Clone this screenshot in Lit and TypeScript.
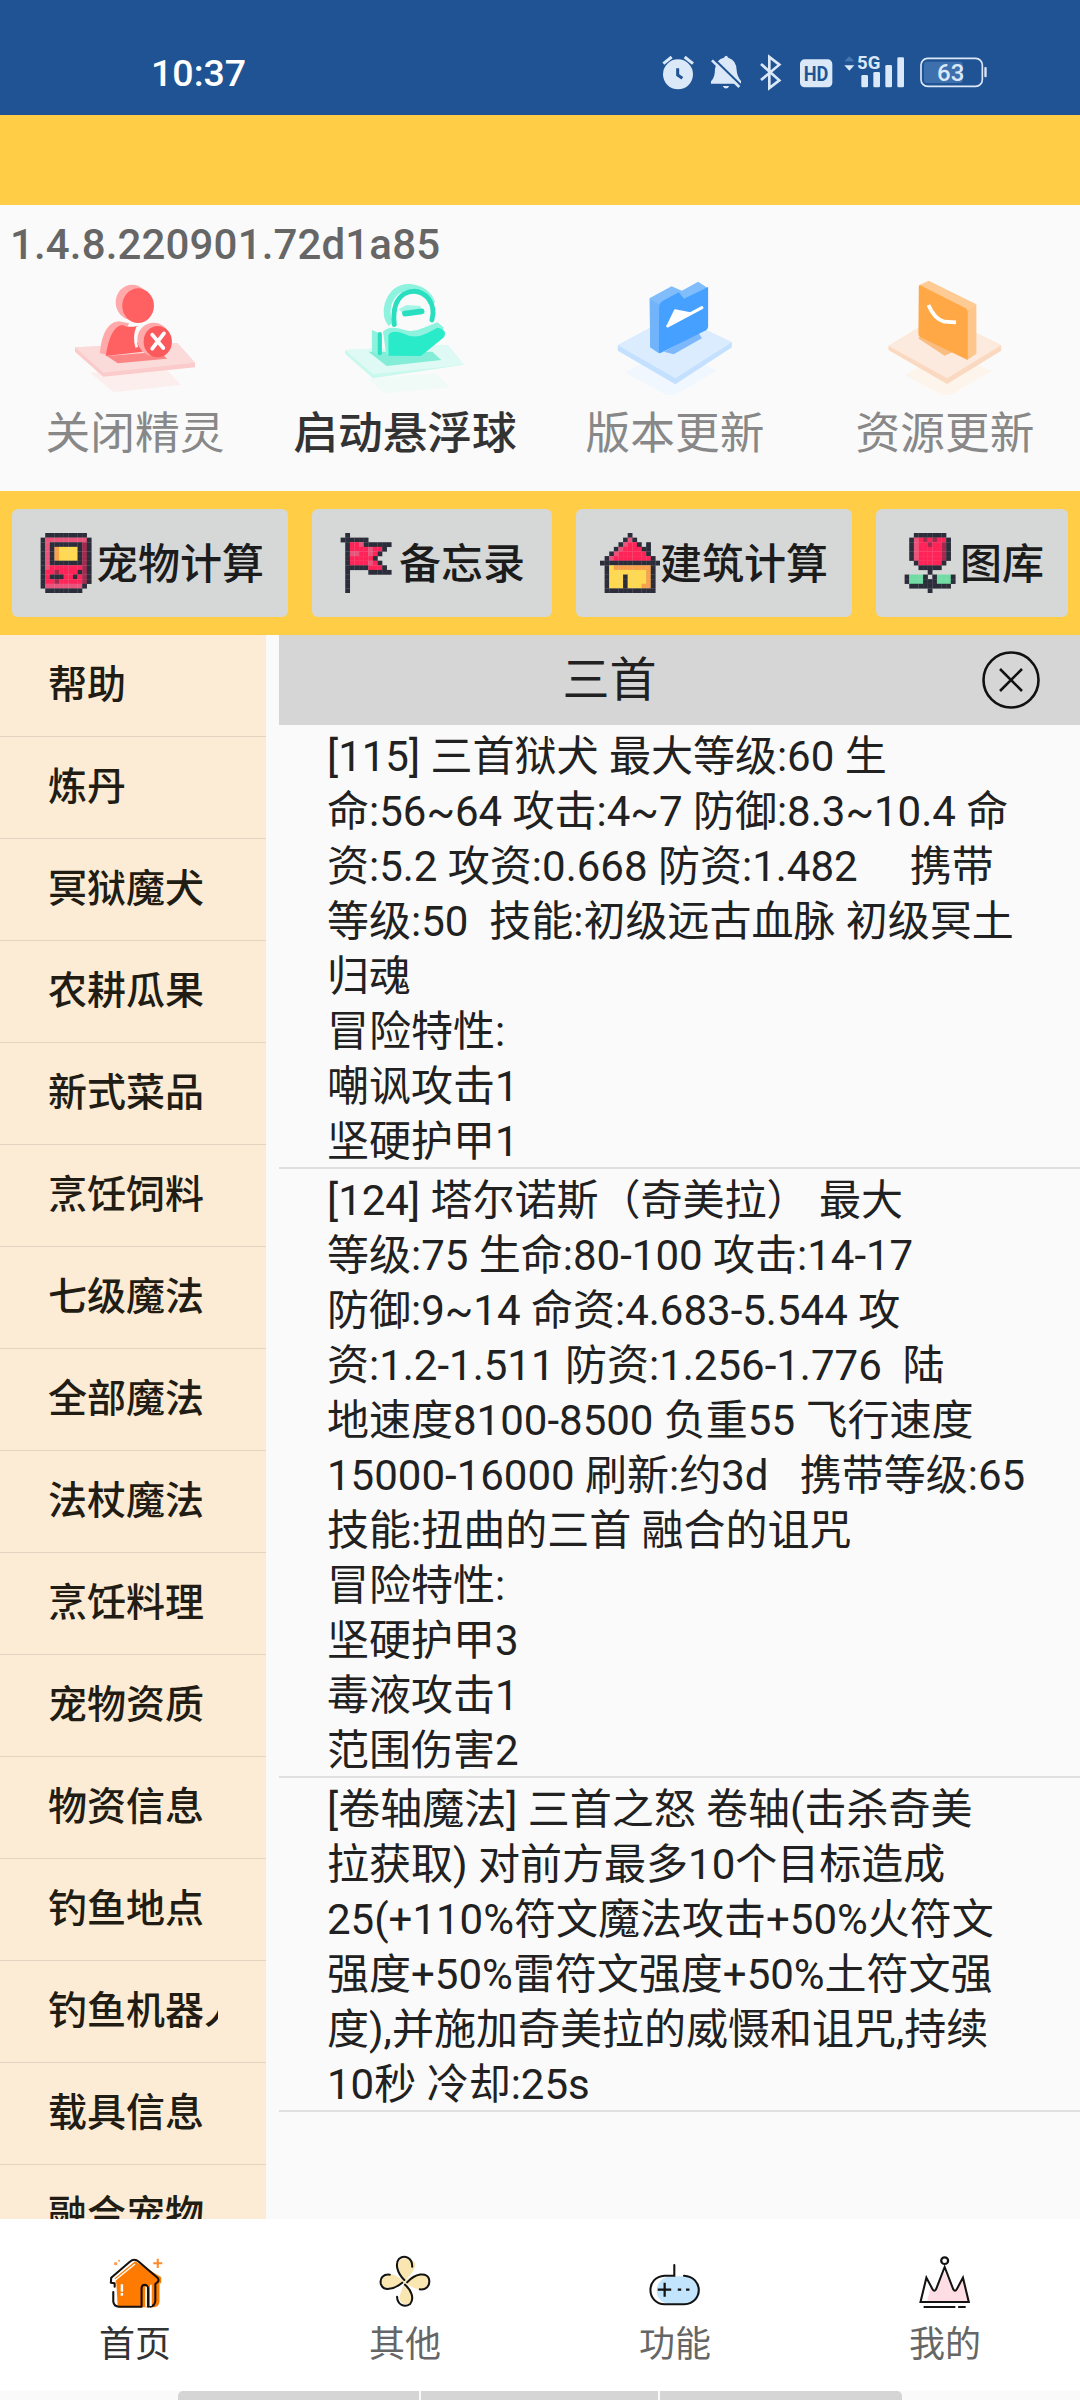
import { css, html, LitElement, svg } from "lit";
import { customElement, property, state } from "lit/decorators.js";
import { classMap } from "lit/directives/class-map.js";

const ACTIONS = [
  { icon: "close-pet", label: "关闭精灵" },
  { icon: "float-ball", label: "启动悬浮球", strong: true },
  { icon: "version", label: "版本更新" },
  { icon: "resource", label: "资源更新" },
];

const TOOLS = [
  { icon: "gameboy", label: "宠物计算", wide: 276 },
  { icon: "flag", label: "备忘录", wide: 240 },
  { icon: "house", label: "建筑计算", wide: 276 },
  { icon: "flower", label: "图库", wide: 192 },
];

const MENU = [
  "帮助",
  "炼丹",
  "冥狱魔犬",
  "农耕瓜果",
  "新式菜品",
  "烹饪饲料",
  "七级魔法",
  "全部魔法",
  "法杖魔法",
  "烹饪料理",
  "宠物资质",
  "物资信息",
  "钓鱼地点",
  "钓鱼机器人",
  "载具信息",
  "融合宠物",
];

const RESULTS = [
  [
    "[115] 三首狱犬 最大等级:60 生",
    "命:56~64 攻击:4~7 防御:8.3~10.4 命",
    "资:5.2 攻资:0.668 防资:1.482     携带",
    "等级:50  技能:初级远古血脉 初级冥土",
    "归魂",
    "冒险特性:",
    "嘲讽攻击1",
    "坚硬护甲1",
  ],
  [
    "[124] 塔尔诺斯（奇美拉） 最大",
    "等级:75 生命:80-100 攻击:14-17",
    "防御:9~14 命资:4.683-5.544 攻",
    "资:1.2-1.511 防资:1.256-1.776  陆",
    "地速度8100-8500 负重55 飞行速度",
    "15000-16000 刷新:约3d   携带等级:65",
    "技能:扭曲的三首 融合的诅咒",
    "冒险特性:",
    "坚硬护甲3",
    "毒液攻击1",
    "范围伤害2",
  ],
  [
    "[卷轴魔法] 三首之怒 卷轴(击杀奇美",
    "拉获取) 对前方最多10个目标造成",
    "25(+110%符文魔法攻击+50%火符文",
    "强度+50%雷符文强度+50%土符文强",
    "度),并施加奇美拉的威慑和诅咒,持续",
    "10秒 冷却:25s",
  ],
];

const TABS = [
  { icon: "home", label: "首页" },
  { icon: "fan", label: "其他" },
  { icon: "gamepad", label: "功能" },
  { icon: "crown", label: "我的" },
];

const PALETTE: Record<string, string> = {
  d: "#2b2d3a",
  r: "#ff2458",
  p: "#e8547c",
  m: "#a3294f",
  y: "#ffd94f",
  o: "#f7a24b",
  g: "#6fdca4",
};

const SPRITES: Record<string, string[]> = {
  gameboy: [
    "..ddddddddd..",
    ".dpppppppppd.",
    ".dpdddddddmd.",
    ".dpdoyyyydmd.",
    ".dpdoyyyydmd.",
    ".dpdoyyyydmd.",
    ".dpdddddddmd.",
    ".dprrrrrrrmd.",
    ".drrmrrrrdmd.",
    ".drdddrrdrmd.",
    ".drrmrrrrrmd.",
    ".dppppppppd..",
    "..dddddddd...",
  ],
  flag: [
    "..d..........",
    ".dddddd......",
    "..drrpdddddd.",
    "..drrrrprrd..",
    "..dpprrprd...",
    "..drrrrrd....",
    "..drrrrprd...",
    "..dddddrrrd..",
    "..d....ddddd.",
    "..d..........",
    "..d..........",
    "..d..........",
    "..d..........",
  ],
  house: [
    "......d......",
    ".....dpd.....",
    "....dprrd.d..",
    "...dprrrrdd..",
    "..dprrrrrrd..",
    ".dprrrrrrrrd.",
    "ddddddddddddd",
    ".dyooooooood.",
    ".dyyyyyyyyod.",
    ".dyyydyyyyod.",
    ".dyyydyyyyod.",
    ".dyyydyyyood.",
    ".ddddddddddd.",
  ],
  flower: [
    "...ddddddd...",
    "..dprmrmrrd..",
    "..dprrmrrmd..",
    "..dprrrrrmd..",
    "..dprrrrrmd..",
    "..dprrrrrmd..",
    "...drrrrrd...",
    "....ddddd....",
    "......d......",
    ".dgggd.dgggd.",
    ".dgggdddgggd.",
    "..ddddddddd..",
    "......d......",
  ],
};

const ISO_ART: Record<string, { box: string; art: unknown }> = {
  "close-pet": {
    box: "218 45 348 360",
    art: svg`
      <path d="M262 338 L480 325 L525 375 L330 397Z" fill="#fdeeee" />
      <path d="M218 262 L515 250 L566 308 V322 L300 350 L218 275Z" fill="#fbcaca" />
      <path d="M218 262 L515 250 L566 308 L300 338Z" fill="#fbdada" />
      <path d="M310 288 L465 275 L485 296 L342 310Z" fill="#fb8585" />
      <path d="M290 280 Q298 188 345 184 L375 190 L330 288Z" fill="#ffa9ab" />
      <path d="M307 288 Q320 200 355 195 Q375 205 400 197 L392 235 L415 275Z" fill="#ff6062" />
      <ellipse cx="384" cy="127" rx="48" ry="53" fill="#ffa9ab" />
      <ellipse cx="401" cy="137" rx="46" ry="52" fill="#ff6062" />
      <path d="M400 200 Q388 230 397 262" fill="none" stroke="#fafafa" stroke-width="8" />
      <ellipse cx="446" cy="238" rx="47" ry="50" fill="#ffa9ab" />
      <ellipse cx="458" cy="245" rx="41" ry="47" fill="#fb5a5d" />
      <path d="M442 224 L474 264 M476 220 L442 266" stroke="#fff" stroke-width="11" stroke-linecap="round" />
    `,
  },
  "float-ball": {
    box: "1002 45 348 360",
    art: svg`
      <path d="M1070 356 L1265 340 L1305 382 L1115 400Z" fill="#f0fbf8" />
      <path d="M1002 270 L1300 255 L1347 314 L1083 355 L1002 281Z" fill="#c9f8ed" />
      <path d="M1002 270 L1300 255 L1347 314 L1083 343Z" fill="#dffaf4" />
      <path d="M1070 275 L1255 275 L1281 300 L1123 318Z" fill="#83edd7" />
      <path d="M1080 210 L1103 220 V285 L1080 275Z" fill="#8df3df" />
      <path d="M1103 222 V280" stroke="#29dfbf" stroke-width="12" stroke-linecap="round" />
      <path d="M1112 215 Q1130 195 1175 210 Q1200 218 1230 203 L1270 187 L1290 204 L1230 260 L1122 285Z" fill="#8df3df" />
      <path d="M1128 225 Q1140 207 1175 222 Q1205 238 1240 220 L1270 203 Q1300 208 1289 232 L1222 288 L1128 287Z" fill="#29ebca" />
      <path d="M1136 192 Q1118 170 1127 132 Q1145 80 1190 82 Q1240 88 1254 130" fill="none" stroke="#8df3df" stroke-width="20" />
      <path d="M1145 194 Q1138 125 1173 102 Q1215 80 1245 117 Q1264 145 1254 180" fill="none" stroke="#29dfbf" stroke-width="14" stroke-linecap="round" />
      <path d="M1158 148 L1180 135 L1220 138 L1225 152 L1175 165Z" fill="#a4f5e5" />
      <path d="M1176 161 L1224 154" stroke="#29dfbf" stroke-width="17" stroke-linecap="round" />
    `,
  },
  version: {
    box: "218 45 348 360",
    art: svg`
      <path d="M247 338 L380 260 L513 332 L380 412Z" fill="#f0f7ff" />
      <path d="M226 256 L390 165 L557 247 V262 L393 373 L226 272Z" fill="#c4e0ff" />
      <path d="M226 256 L390 165 L557 247 L393 355Z" fill="#dbecff" />
      <path d="M360 275 L460 218 L470 235 L388 283Z" fill="#7cb8fb" />
      <path d="M318 115 L382 79 L412 92 L459 65 L488 85 L346 280 L320 262Z" fill="#81bdfb" />
      <path d="M320 118 L346 133 V280 L320 262Z" fill="#72b4fb" />
      <path d="M346 140 Q346 129 357 122 L403 97 L418 116 L488 81 V200 Q487 209 476 214 L350 279 Q345 281 345 274Z" fill="#46a0ff" />
      <path d="M371 196 L392 151 L436 160 Z" fill="#fff" stroke="#fff" stroke-width="6" stroke-linejoin="round" />
      <path d="M371 198 L470 143" stroke="#fff" stroke-width="9" stroke-linecap="round" />
    `,
  },
  resource: {
    box: "1002 45 348 360",
    art: svg`
      <path d="M1060 345 L1180 275 L1312 333 L1180 412Z" fill="#fdf5ec" />
      <path d="M1012 258 L1160 165 L1339 256 V272 L1182 372 L1012 270Z" fill="#fad9c0" />
      <path d="M1012 258 L1160 165 L1339 256 L1182 355Z" fill="#fbeadd" />
      <path d="M1098 235 L1110 225 L1200 275 L1175 287Z" fill="#f9bd83" />
      <path d="M1100 76 L1129 62 L1267 133 L1240 155Z" fill="#ffcb94" />
      <path d="M1240 153 L1267 133 V281 L1240 300Z" fill="#ffc68b" />
      <path d="M1100 79 Q1101 73 1110 79 L1236 145 Q1242 150 1242 156 V300 L1105 232 Q1098 228 1099 219Z" fill="#ffa845" />
      <path d="M1128 135 Q1145 177 1174 185 L1208 187" fill="none" stroke="#fff" stroke-width="11" />
    `,
  },
};

const TAB_ART: Record<string, { box: string; art: unknown }> = {
  home: {
    box: "303 330 174 180",
    art: svg`
      <path d="M331 415 L390 364 L466 412 V430 H461 V485 Q459 502 443 502 H340 L336 430Z" fill="#ff7a00" />
      <path d="M326 426 L390 372 M333 432 V455" fill="none" stroke="#fff" stroke-width="4" />
      <path d="M331 440 V430 L320 428 L321 413 L375 365 Q388 354 401 365 L456 414 Q462 423 451 430 L449 432 V482 Q448 498 434 500 M327 456 V485 Q329 500 344 500 H409 V446 Q409 434 419 434 Q428 436 428 448 V500" fill="none" stroke="#15110c" stroke-width="6" stroke-linecap="round" stroke-linejoin="round" />
      <path d="M422 440 V500" stroke="#fff" stroke-width="5" />
      <path d="M436 434 V498" stroke="#fff" stroke-width="5" />
      <path d="M352 433 V455 M352 459 V467" stroke="#fff" stroke-width="7" />
      <path d="M456 356 V384 M443 370 H469" stroke="#ff8a2b" stroke-width="6" />
      <circle cx="334" cy="371" r="5" fill="#ff9a4a" />
      <circle cx="344" cy="362" r="3" fill="#ff9a4a" />
    `,
  },
  fan: {
    box: "1087 330 174 180",
    art: svg`
      <path d="M1172 425 Q1145 380 1157 362 Q1178 345 1204 370 Q1206 390 1172 425Z M1172 425 Q1133 455 1108 438 Q1096 412 1131 404 Q1140 398 1172 425Z M1172 425 Q1211 390 1238 407 Q1250 430 1228 447 Q1205 453 1172 425Z M1172 425 Q1205 465 1190 490 Q1160 500 1158 470Z" fill="#fae6b0" />
      <path d="M1172 420 C1150 398 1145 370 1157 356 C1172 344 1195 352 1195 380 M1166 428 C1140 450 1110 454 1104 432 C1100 413 1112 402 1130 404 M1180 427 C1205 400 1235 396 1243 415 C1249 437 1235 450 1217 448 M1174 434 C1192 450 1202 475 1189 492 C1172 504 1152 494 1151 470" fill="none" stroke="#131313" stroke-width="6" stroke-linecap="round" />
    `,
  },
  gamepad: {
    box: "303 330 174 180",
    art: svg`
      <rect x="337" y="409" width="126" height="85" rx="42" fill="#c2e5fd" />
      <path d="M388 375 V407 H360 C305 410 305 490 360 493 H417 C474 488 472 410 416 407" fill="none" stroke="#131313" stroke-width="6" stroke-linecap="round" />
      <path d="M340 449 H379 M360 428 V470 M398 449 H408 M422 449 H432" stroke="#131313" stroke-width="6.5" />
    `,
  },
  crown: {
    box: "1087 330 174 180",
    art: svg`
      <path d="M1122 486 L1132 440 L1144 455 L1172 395 L1203 455 L1230 413 L1245 486Z" fill="#fedde4" />
      <path d="M1103 486 L1120 413 L1138 448 Q1143 457 1148 448 L1173 381 L1198 448 Q1203 457 1208 448 L1226 413 L1243 486Z" fill="none" stroke="#131313" stroke-width="6" />
      <circle cx="1173" cy="362" r="10" fill="#fff" stroke="#131313" stroke-width="6.5" />
      <path d="M1112 501 H1204 M1212 501 H1234" stroke="#131313" stroke-width="6.5" />
    `,
  },
};

@customElement("status-bar")
export class StatusBar extends LitElement {
  static styles = css`
    :host {
      display: flex;
      justify-content: space-between;
      align-items: center;
      box-sizing: border-box;
      height: 115px;
      padding: 30px 89px 0 151px;
      background: #1f5393;
      color: #fff;
      font: 500 37.5px/50px Roboto, sans-serif;
    }

    svg {
      display: block;
      width: 330px;
      height: 40px;
    }

    .hd {
      font: 700 62px Roboto, sans-serif;
    }

    .network {
      font: 700 56px Roboto, sans-serif;
    }

    .battery {
      font: 500 70px Roboto, sans-serif;
    }
  `;

  render() {
    return html`
      <span>10:37</span>
      <svg viewBox="63 38 990 120" fill="#dbe8f8">
        <circle cx="114" cy="102" r="45" />
        <path d="M70 70 L95 50 M134 50 L159 70" stroke="#dbe8f8" stroke-width="9" />
        <path d="M113 84 V104 L127 114" fill="none" stroke="#1f5393" stroke-width="9" />

        <path d="M213 130 V123 Q225 112 225 85 Q229 56 252 52 Q258 41 265 52 Q289 59 290 90 Q291 108 303 122 V130Z" />
        <path d="M248 137 H268 Q258 152 248 137Z" />
        <path d="M222 56 L308 140" stroke="#1f5393" stroke-width="7" />
        <path d="M216 60 L298 140" stroke="#dbe8f8" stroke-width="8" />
        <path d="M363 71 L418 120 L388 143 V50 L418 73 L363 119" fill="none" stroke="#dbe8f8" stroke-width="8" />

        <rect x="480" y="57" width="97" height="84" rx="14" />
        <text class="hd" x="528" y="121" text-anchor="middle" fill="#1f5393" textLength="74" lengthAdjust="spacingAndGlyphs">HD</text>

        <path d="M613 63 L628 48 L643 63Z" fill="#4777b0" />
        <path d="M613 75 H643 L628 91Z" />
        <rect x="664" y="104" width="20" height="37" rx="4" />
        <rect x="700" y="95" width="20" height="46" rx="4" />
        <rect x="736" y="74" width="20" height="67" rx="4" />
        <rect x="772" y="51" width="20" height="90" rx="4" />
        <text class="network" x="651" y="87" textLength="70" lengthAdjust="spacingAndGlyphs">5G</text>

        <rect x="852" y="64" width="116" height="64" rx="8" fill="#3f70ae" />
        <rect x="843" y="54" width="184" height="84" rx="20" fill="none" stroke="#dbe8f8" stroke-width="5" />
        <rect x="1033" y="80" width="7" height="31" rx="3" />
        <text class="battery" x="932" y="122" text-anchor="middle" textLength="82" lengthAdjust="spacingAndGlyphs">63</text>
      </svg>
    `;
  }
}

@customElement("pixel-icon")
export class PixelIcon extends LitElement {
  static styles = css`
    :host,
    svg {
      display: block;
      width: 60px;
      height: 60px;
    }
  `;

  @property() name = "";

  render() {
    const rows = SPRITES[this.name] ?? [];
    return html`
      <svg viewBox="0 0 13 13">
        ${rows.map((row, y) =>
          [...row].map((key, x) =>
            key === "."
              ? ""
              : svg`<rect x=${x} y=${y} width="1.04" height="1.04" fill=${PALETTE[key]} />`
          )
        )}
      </svg>
    `;
  }
}

@customElement("app-root")
export class AppRoot extends LitElement {
  static styles = css`
    :host {
      display: flex;
      flex-direction: column;
      width: 1080px;
      height: 2400px;
      overflow: hidden;
      background: #fafafa;
      color: #212121;
      font-family: Roboto, "Noto Sans CJK SC", sans-serif;
    }

    .banner {
      height: 90px;
      background: #ffce46;
    }

    .version {
      box-sizing: border-box;
      height: 70px;
      padding: 15px 10px 0;
      color: #666;
      font-size: 42px;
      font-weight: 500;
      letter-spacing: 0.15px;
      line-height: 50px;
    }

    .actions {
      display: grid;
      grid-template-columns: repeat(4, 1fr);
      height: 216px;
    }

    .action {
      display: flex;
      flex-direction: column;
      align-items: center;
      color: #888;
      font-size: 44.7px;
      line-height: 78px;
      white-space: nowrap;
    }

    .action.strong {
      color: #333;
      font-weight: 500;
    }

    .action svg {
      width: 120px;
      height: 120px;
    }

    .tools {
      display: flex;
      gap: 24px;
      box-sizing: border-box;
      height: 144px;
      padding: 18px 12px;
      background: #ffce46;
    }

    .tool {
      display: flex;
      align-items: center;
      box-sizing: border-box;
      height: 108px;
      padding: 0 24px;
      border: 0;
      border-radius: 6px;
      background: #d6d8d7;
      color: #1c1c1c;
      font: 500 42px/60px Roboto, "Noto Sans CJK SC", sans-serif;
    }

    .tool span {
      flex: 1;
      padding-top: 4px;
      text-align: center;
      white-space: nowrap;
    }

    .content {
      display: flex;
      gap: 13px;
      height: 1584px;
      overflow: hidden;
    }

    .menu {
      flex: none;
      width: 266px;
      background: #fdecd5;
      color: #211c14;
      font-size: 39px;
      font-weight: 500;
    }

    .menu-item {
      box-sizing: border-box;
      height: 102px;
      padding: 0 48px;
      border-bottom: 1px solid #e2d5c4;
      line-height: 101px;
    }

    .menu-item span {
      display: block;
      overflow: hidden;
      white-space: nowrap;
    }

    .panel {
      flex: 1;
    }

    .search {
      display: flex;
      align-items: center;
      box-sizing: border-box;
      height: 90px;
      padding-right: 39px;
      background: #d6d6d6;
      font-size: 47px;
      line-height: 92px;
    }

    .search span {
      flex: 1;
      padding-right: 41px;
      text-align: center;
    }

    .search svg {
      width: 60px;
      height: 60px;
      fill: none;
      stroke: #111;
      stroke-width: 2.6;
    }

    .result {
      padding: 4px 0 0 48px;
      border-bottom: 2px solid #e0e0e0;
      font-size: 42px;
      line-height: 55px;
    }

    .lines {
      margin-bottom: -2px;
      white-space: pre;
    }

    .tabs {
      display: grid;
      grid-template-columns: repeat(4, 1fr);
      flex: none;
      box-sizing: border-box;
      height: 172px;
      padding-top: 31px;
      background: #fff;
    }

    .tab {
      display: flex;
      flex-direction: column;
      align-items: center;
      color: #666;
      font-size: 36px;
      line-height: 70px;
    }

    .tab.active {
      color: #333;
    }

    .tab svg {
      width: 60px;
      height: 60px;
    }

    .gesture {
      display: grid;
      grid-template-columns: 241px 1fr 242px;
      gap: 2px;
      width: 724px;
      height: 9px;
      margin: 0 auto;
      border-radius: 5px 5px 0 0;
      overflow: hidden;
    }

    .gesture i {
      background: #d5d5d5;
    }
  `;

  @state() private tab = "home";

  private art(source: { box: string; art: unknown }) {
    return html`<svg viewBox=${source.box} preserveAspectRatio="none">
      ${source.art}
    </svg>`;
  }

  render() {
    return html`
      <status-bar></status-bar>
      <div class="banner"></div>
      <div class="version">1.4.8.220901.72d1a85</div>

      <div class="actions">
        ${ACTIONS.map(
          (item) => html`
            <div class=${classMap({ action: true, strong: !!item.strong })}>
              ${this.art(ISO_ART[item.icon])}
              <span>${item.label}</span>
            </div>
          `
        )}
      </div>

      <div class="tools">
        ${TOOLS.map(
          (item) => html`
            <button class="tool" style="width: ${item.wide}px">
              <pixel-icon name=${item.icon}></pixel-icon>
              <span>${item.label}</span>
            </button>
          `
        )}
      </div>

      <div class="content">
        <div class="menu">
          ${MENU.map(
            (label) => html`<div class="menu-item"><span>${label}</span></div>`
          )}
        </div>
        <div class="panel">
          <div class="search">
            <span>三首</span>
            <svg viewBox="0 0 60 60">
              <circle cx="30" cy="30" r="27.5" />
              <path d="M19 19 L41 41 M41 19 L19 41" />
            </svg>
          </div>
          ${RESULTS.map(
            (lines) => html`
              <div class="result">
                <div class="lines">${lines.join("\n")}</div>
              </div>
            `
          )}
        </div>
      </div>

      <div class="tabs">
        ${TABS.map(
          (item) => html`
            <div
              class=${classMap({ tab: true, active: item.icon === this.tab })}
              @click=${() => (this.tab = item.icon)}
            >
              ${this.art(TAB_ART[item.icon])}
              <span>${item.label}</span>
            </div>
          `
        )}
      </div>
      <div class="gesture"><i></i><i></i><i></i></div>
    `;
  }
}
